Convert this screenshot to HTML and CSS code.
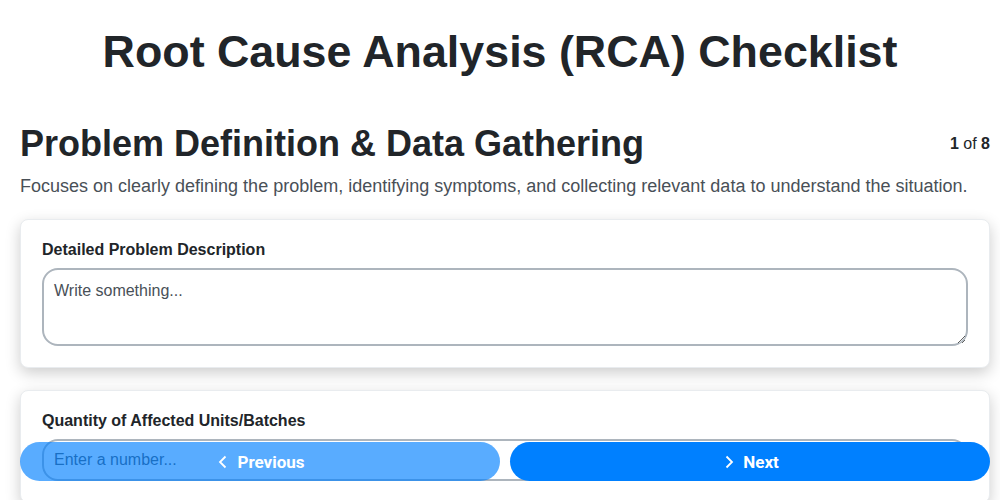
FILE: index.html
```html
<!DOCTYPE html>
<html lang="en">
<head>
<meta charset="utf-8">
<title>RCA Checklist</title>
<link rel="stylesheet" href="styles.css">
</head>
<body>
<h1 class="title">Root Cause Analysis (RCA) Checklist</h1>
<main class="content">
  <div class="section-head">
    <h2 class="section-title">Problem Definition &amp; Data Gathering</h2>
    <div class="counter"><b>1</b> of <b>8</b></div>
  </div>
  <p class="section-desc">Focuses on clearly defining the problem, identifying symptoms, and collecting relevant data to understand the situation.</p>
  <div class="card">
    <label class="field-label">Detailed Problem Description</label>
    <textarea class="textarea" placeholder="Write something..."></textarea>
  </div>
  <div class="card">
    <label class="field-label">Quantity of Affected Units/Batches</label>
    <input class="input" type="text" placeholder="Enter a number...">
  </div>
</main>
<div class="nav">
  <button class="btn btn-prev" disabled>
    <svg class="chev" viewBox="0 0 16 16" width="16" height="16"><path d="M10.5 2.5 5 8l5.5 5.5" fill="none" stroke="currentColor" stroke-width="1.8"/></svg>
    Previous
  </button>
  <button class="btn btn-next">
    <svg class="chev" viewBox="0 0 16 16" width="16" height="16"><path d="M5.5 2.5 11 8l-5.5 5.5" fill="none" stroke="currentColor" stroke-width="1.8"/></svg>
    Next
  </button>
</div>
</body>
</html>
```
FILE: styles.css
```css
html, body {
  margin: 0;
  padding: 0;
  background: #ffffff;
}
body {
  font-family: "Liberation Sans", Arial, sans-serif;
  color: #212529;
  overflow: hidden;
}
.title {
  margin: 24px 0 0;
  font-size: 44.8px;
  line-height: 54px;
  font-weight: 700;
  text-align: center;
}
.content {
  display: block;
  padding: 0 10px 80px 20px;
}
.section-head {
  display: flex;
  align-items: center;
  justify-content: space-between;
  margin-top: 44px;
}
.section-title {
  margin: 0;
  font-size: 36px;
  line-height: 44px;
  font-weight: 700;
}
.counter {
  font-size: 16px;
}
.section-desc {
  margin: 8px 0 0;
  font-size: 18px;
  line-height: 24px;
  color: #495057;
}
.card {
  margin-top: 21px;
  background: #fff;
  border: 1px solid #e9ecef;
  border-radius: 8px;
  padding: 20px 21px 21px;
  box-shadow: 0 5px 15px rgba(0, 0, 0, 0.2);
}
.card + .card {
  margin-top: 22px;
}
.field-label {
  display: block;
  font-size: 16px;
  font-weight: 700;
  line-height: 20px;
  margin-bottom: 8px;
}
.textarea, .input {
  display: block;
  width: 100%;
  box-sizing: border-box;
  border: 2px solid #adb5bd;
  border-radius: 16px;
  padding: 10px 10px;
  font-family: "Liberation Sans", Arial, sans-serif;
  font-size: 16px;
  color: #212529;
  background: #fff;
}
.textarea {
  height: 78px;
  padding-top: 12px;
  resize: vertical;
}
.input {
  height: 42px;
}
.textarea::placeholder, .input::placeholder {
  color: #495057;
  opacity: 1;
}
.nav {
  position: fixed;
  left: 20px;
  right: 10px;
  bottom: 19px;
  display: flex;
  gap: 10px;
}
.btn {
  flex: 1;
  height: 39px;
  border: none;
  border-radius: 20px;
  background: #0080ff;
  color: #fff;
  font-family: Roboto, "Liberation Sans", sans-serif;
  font-size: 17px;
  font-weight: 700;
  display: flex;
  align-items: center;
  justify-content: center;
  gap: 6px;
}
.btn-prev {
  opacity: 0.65;
}
.chev {
  display: block;
}
```
